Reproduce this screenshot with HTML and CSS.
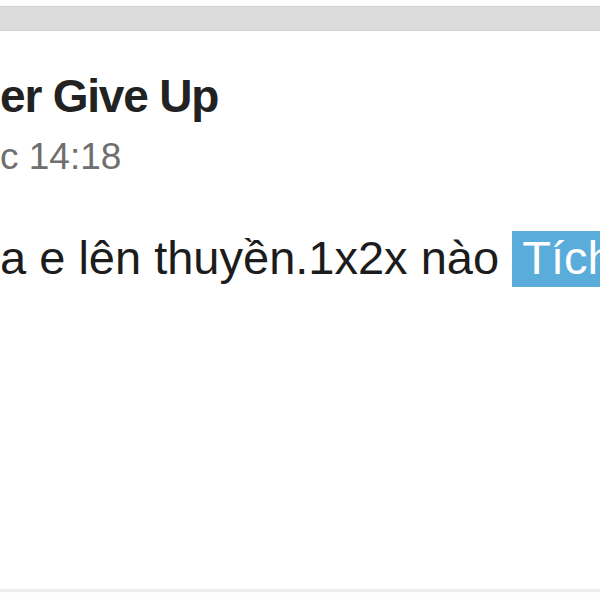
FILE: index.html
```html
<!DOCTYPE html>
<html lang="vi">
<head>
    <meta charset="UTF-8">
    <meta name="viewport" content="width=device-width, initial-scale=1.0">
    <title>Post</title>
    <link rel="stylesheet" href="styles.css">
</head>
<body>
    <div class="top-strip"></div>
    <div class="top-bar"></div>
    <div class="post">
        <div class="post-header">
            <div class="author">er Give Up</div>
            <div class="time">c 14:18</div>
        </div>
        <div class="post-body">a e lên thuyền.1x2x nào <span class="tag">Tích</span></div>
    </div>
    <div class="bottom-line"></div>
</body>
</html>
```

FILE: styles.css
```css
body {
    margin: 0;
    background-color: #fcfcfc;
    font-family: "Liberation Sans", Arial, sans-serif;
    overflow: hidden;
}
.top-strip {
    height: 6px;
    background-color: #fdfdfd;
}
.top-bar {
    height: 23px;
    background-color: #dcdcdc;
    border-top: 1px solid #d3d3d3;
    border-bottom: 1px solid #d3d3d3;
}
.post {
    height: 558px;
    background-color: #fff;
    padding-top: 35px;
    box-sizing: border-box;
    white-space: nowrap;
    overflow: hidden;
}
.post-header {
    display: flex;
    flex-direction: column;
    gap: 5px;
}
.author {
    font-size: 46px;
    line-height: 60px;
    font-weight: bold;
    letter-spacing: -1.2px;
    color: #222;
}
.time {
    font-size: 37px;
    line-height: 52px;
    color: #6f6f6f;
}
.post-body {
    margin-top: 47px;
    font-size: 47px;
    line-height: 56px;
    color: #1c1c1c;
}
.tag {
    background-color: #5aacdb;
    color: #fff;
    padding: 0 10px 3px;
}
.bottom-line {
    height: 3px;
    background-color: #ececec;
}
```
